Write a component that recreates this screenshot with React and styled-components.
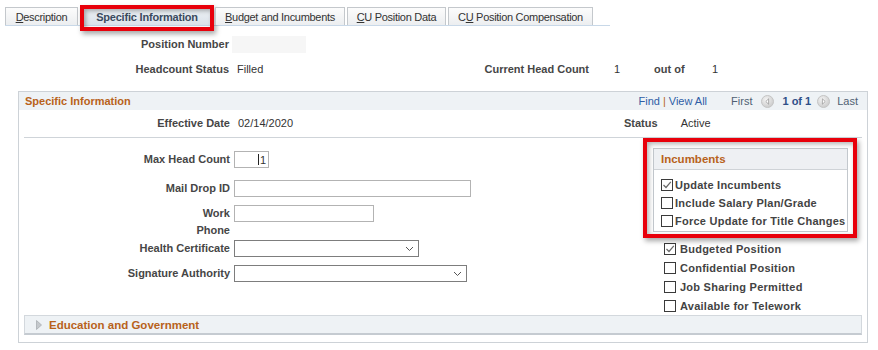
import React from "react";
import styled, { createGlobalStyle, css } from "styled-components";

const GlobalStyle = createGlobalStyle`
  html, body { margin: 0; padding: 0; background: #fff; }
  body {
    font-family: "Liberation Sans", Arial, sans-serif;
    font-size: 11px;
    color: #333;
  }
  * { box-sizing: border-box; }
`;

const ORANGE = "#b8621b";
const LABEL = "#464646";

const Page = styled.div`
  width: 878px;
  height: 350px;
  overflow: hidden;
  padding-top: 7px;
`;

/* ---------- Tabs ---------- */
const TabStrip = styled.div`
  display: flex;
  align-items: flex-end;
  margin-left: 5px;
  width: 605px;
  height: 19px;
  border-bottom: 1px solid #c8d8e8;
`;

const Tab = styled.div`
  position: relative;
  flex: none;
  width: ${(p) => p.$w}px;
  height: 18px;
  margin-right: ${(p) => p.$gap || 0}px;
  display: flex;
  align-items: center;
  justify-content: center;
  border: 1px solid #c4c8cc;
  border-bottom: none;
  background: linear-gradient(#fcfcfc, #eceef0);
  font-size: 11px;
  letter-spacing: -0.3px;
  color: #333;
  white-space: nowrap;
  ${(p) =>
    p.$active &&
    css`
      background: linear-gradient(#edf1f5, #dbe2ea);
      border-color: #a9bdd3;
      font-weight: bold;
      color: #3b4a5e;
      letter-spacing: -0.2px;
      &::after {
        content: "";
        position: absolute;
        left: -3px;
        top: -3px;
        right: -3px;
        bottom: -6px;
        border: 4px solid #e8000b;
        box-shadow: 2px 3px 5px rgba(0, 0, 0, 0.35),
          inset 2px 2px 4px rgba(0, 0, 0, 0.3);
        pointer-events: none;
      }
    `}
`;

/* ---------- Top info ---------- */
const InfoBlock = styled.div`
  margin-top: 10px;
  display: flex;
  flex-direction: column;
  gap: 8px;
`;

const InfoRow = styled.div`
  display: flex;
  align-items: center;
  height: 17px;
`;

const Label = styled.div`
  flex: none;
  width: ${(p) => (p.$w ? `${p.$w}px` : "auto")};
  text-align: right;
  font-weight: bold;
  color: ${LABEL};
  line-height: 17px;
  white-space: nowrap;
`;

const Value = styled.div`
  flex: none;
  width: ${(p) => (p.$w ? `${p.$w}px` : "auto")};
  padding-left: ${(p) => p.$pl || 0}px;
  color: #333;
  line-height: 17px;
  white-space: nowrap;
`;

const ReadBox = styled.div`
  margin-left: 3px;
  width: 74px;
  height: 17px;
  background: #f6f6f6;
`;

/* ---------- Section ---------- */
const Section = styled.section`
  margin: 13px 0 0 18px;
  width: 850px;
  border: 1px solid #cdd2d7;
  padding-bottom: 7px;
`;

const SectionHeader = styled.div`
  height: 18px;
  background: #eef2f5;
  display: flex;
  align-items: center;
  justify-content: space-between;
  padding: 0 9px 0 6px;
`;

const SectionTitle = styled.div`
  font-weight: bold;
  color: ${ORANGE};
  font-size: ${(p) => p.$size || 11}px;
`;

const Nav = styled.div`
  display: flex;
  align-items: center;
  white-space: nowrap;
`;

const NavLink = styled.span`
  color: #2f5ea6;
`;

const NavSep = styled.span`
  color: ${ORANGE};
  margin: 0 3px;
`;

const NavText = styled.span`
  color: #4f5f73;
  margin-left: ${(p) => p.$ml || 0}px;
  font-weight: ${(p) => (p.$bold ? "bold" : "normal")};
  ${(p) => p.$bold && css`color: #2e4f88;`}
`;

const PagerBtn = styled.span`
  display: inline-flex;
  width: 13px;
  height: 13px;
  margin: 0 ${(p) => p.$mr}px 0 ${(p) => p.$ml}px;
`;

const EffRow = styled.div`
  margin: 0 5px;
  height: 28px;
  display: flex;
  align-items: center;
  border-bottom: 1px solid #cfd4d9;
`;

const Body = styled.div`
  display: flex;
  align-items: flex-start;
`;

const FormCol = styled.div`
  padding-top: 13px;
  display: flex;
  flex-direction: column;
`;

const FieldRow = styled.div`
  display: flex;
  align-items: flex-start;
  gap: 4px;
  margin-top: ${(p) => p.$mt || 0}px;
`;

const TextBox = styled.div`
  width: ${(p) => p.$w}px;
  height: 17px;
  border: 1px solid #b3b3b3;
  background: #fff;
  display: flex;
  align-items: center;
  justify-content: flex-end;
  padding-right: 2px;
  color: #333;
`;

const Caret = styled.span`
  display: inline-block;
  width: 1px;
  height: 11px;
  background: #222;
  margin-right: 1px;
`;

const SelectBox = styled.div`
  width: ${(p) => p.$w}px;
  height: 17px;
  border: 1px solid #7d7d7d;
  background: #fff;
  display: flex;
  align-items: center;
  justify-content: flex-end;
  padding-right: 4px;
`;

const SideCol = styled.div`
  margin-left: auto;
  margin-right: 19px;
  width: 195px;
  display: flex;
  flex-direction: column;
`;

const GroupBox = styled.div`
  position: relative;
  margin-top: 10px;
  border: 1px solid #c3c8cd;
  background: #fff;
  &::after {
    content: "";
    position: absolute;
    left: -11px;
    top: -11px;
    right: -10px;
    bottom: -7px;
    border: 4px solid #e8000b;
    box-shadow: 2px 3px 5px rgba(0, 0, 0, 0.35),
      inset 2px 2px 5px rgba(0, 0, 0, 0.3);
    pointer-events: none;
  }
`;

const GroupHeader = styled.div`
  height: 21px;
  background: #eef0f3;
  border-bottom: 1px solid #cfd3d7;
  display: flex;
  align-items: center;
  padding-left: 7px;
`;

const GroupBody = styled.div`
  padding: 6px 0 1px 7px;
`;

const CheckList = styled.div`
  margin-top: 7px;
  padding-left: 11px;
`;

const CheckRow = styled.div`
  display: flex;
  align-items: center;
  height: ${(p) => p.$h}px;
  gap: ${(p) => p.$gap}px;
`;

const Box = styled.span`
  flex: none;
  width: 12px;
  height: 12px;
  border: 1px solid #3a3a3a;
  background: #fff;
  display: inline-flex;
`;

const CheckLabel = styled.span`
  font-weight: bold;
  color: #434343;
  letter-spacing: 0.25px;
  white-space: nowrap;
`;

const EduBar = styled.div`
  margin: 0 5px;
  height: 20px;
  background: #eef2f5;
  border: 1px solid #d3d8dd;
  border-bottom: 2px solid #c5cbd1;
  display: flex;
  align-items: center;
  gap: 7px;
  padding-left: 11px;
`;

/* ---------- Small drawings ---------- */
const Chevron = () => (
  <svg width="9" height="6" viewBox="0 0 9 6">
    <path d="M1 1 L4.5 4.5 L8 1" fill="none" stroke="#555" strokeWidth="1" />
  </svg>
);

const Pager = ({ dir, id }) => (
  <svg width="13" height="13" viewBox="0 0 13 13">
    <defs>
      <radialGradient id={id} cx="40%" cy="35%" r="70%">
        <stop offset="0%" stopColor="#f4f4f4" />
        <stop offset="100%" stopColor="#c9c9c9" />
      </radialGradient>
    </defs>
    <circle cx="6.5" cy="6.5" r="6" fill={`url(#${id})`} stroke="#c4c4c4" />
    {dir === "left" ? (
      <path d="M7.6 3.8 L4.8 6.5 L7.6 9.2 Z" fill="#fff" stroke="#8f8f8f" strokeWidth="0.7" />
    ) : (
      <path d="M5.4 3.8 L8.2 6.5 L5.4 9.2 Z" fill="#fff" stroke="#8f8f8f" strokeWidth="0.7" />
    )}
  </svg>
);

const Check = ({ checked }) => (
  <Box>
    {checked && (
      <svg width="10" height="10" viewBox="0 0 10 10">
        <path d="M1.5 5 L4 7.5 L8.8 1.8" fill="none" stroke="#6a6a6a" strokeWidth="1.2" />
      </svg>
    )}
  </Box>
);

const Triangle = () => (
  <svg width="6" height="10" viewBox="0 0 6 10">
    <path d="M0.5 0.5 L5.5 5 L0.5 9.5 Z" fill="#c4c8cc" stroke="#a9aeb3" strokeWidth="0.8" />
  </svg>
);

export default function App() {
  return (
    <Page>
      <GlobalStyle />
      <TabStrip>
        <Tab $w={73} $gap={4}>
          <span><u>D</u>escription</span>
        </Tab>
        <Tab $w={130} $gap={3} $active>
          Specific Information
        </Tab>
        <Tab $w={130} $gap={2}>
          <span><u>B</u>udget and Incumbents</span>
        </Tab>
        <Tab $w={99} $gap={2}>
          <span><u>C</u>U Position Data</span>
        </Tab>
        <Tab $w={145}>
          <span>C<u>U</u> Position Compensation</span>
        </Tab>
      </TabStrip>

      <InfoBlock>
        <InfoRow>
          <Label $w={229}>Position Number</Label>
          <ReadBox />
        </InfoRow>
        <InfoRow>
          <Label $w={229}>Headcount Status</Label>
          <Value $w={251} $pl={8}>Filled</Value>
          <Label $w={109}>Current Head Count</Label>
          <Value $w={65} $pl={25}>1</Value>
          <Label $w={58} style={{ textAlign: "left" }}>out of</Label>
          <Value>1</Value>
        </InfoRow>
      </InfoBlock>

      <Section>
        <SectionHeader>
          <SectionTitle>Specific Information</SectionTitle>
          <Nav>
            <NavLink>Find</NavLink>
            <NavSep>|</NavSep>
            <NavLink>View All</NavLink>
            <NavText $ml={24}>First</NavText>
            <PagerBtn $ml={9} $mr={8}>
              <Pager dir="left" id="pgl" />
            </PagerBtn>
            <NavText $bold>1 of 1</NavText>
            <PagerBtn $ml={6} $mr={7}>
              <Pager dir="right" id="pgr" />
            </PagerBtn>
            <NavText>Last</NavText>
          </Nav>
        </SectionHeader>

        <EffRow>
          <Label $w={206}>Effective Date</Label>
          <Value $w={394} $pl={8}>02/14/2020</Value>
          <Label>Status</Label>
          <Value $pl={23}>Active</Value>
        </EffRow>

        <Body>
          <FormCol>
            <FieldRow>
              <Label $w={211}>Max Head Count</Label>
              <TextBox $w={35}>
                <Caret />1
              </TextBox>
            </FieldRow>
            <FieldRow $mt={12}>
              <Label $w={211}>Mail Drop ID</Label>
              <TextBox $w={237} />
            </FieldRow>
            <FieldRow $mt={8}>
              <Label $w={211}>
                Work
                <br />
                Phone
              </Label>
              <TextBox $w={140} />
            </FieldRow>
            <FieldRow $mt={1}>
              <Label $w={211}>Health Certificate</Label>
              <SelectBox $w={185}>
                <Chevron />
              </SelectBox>
            </FieldRow>
            <FieldRow $mt={8}>
              <Label $w={211}>Signature Authority</Label>
              <SelectBox $w={233}>
                <Chevron />
              </SelectBox>
            </FieldRow>
          </FormCol>

          <SideCol>
            <GroupBox>
              <GroupHeader>
                <SectionTitle $size={11.5}>Incumbents</SectionTitle>
              </GroupHeader>
              <GroupBody>
                <CheckRow $h={18} $gap={2}>
                  <Check checked />
                  <CheckLabel>Update Incumbents</CheckLabel>
                </CheckRow>
                <CheckRow $h={18} $gap={2}>
                  <Check />
                  <CheckLabel>Include Salary Plan/Grade</CheckLabel>
                </CheckRow>
                <CheckRow $h={18} $gap={2}>
                  <Check />
                  <CheckLabel>Force Update for Title Changes</CheckLabel>
                </CheckRow>
              </GroupBody>
            </GroupBox>
            <CheckList>
              <CheckRow $h={19} $gap={4}>
                <Check checked />
                <CheckLabel>Budgeted Position</CheckLabel>
              </CheckRow>
              <CheckRow $h={19} $gap={4}>
                <Check />
                <CheckLabel>Confidential Position</CheckLabel>
              </CheckRow>
              <CheckRow $h={19} $gap={4}>
                <Check />
                <CheckLabel>Job Sharing Permitted</CheckLabel>
              </CheckRow>
              <CheckRow $h={19} $gap={4}>
                <Check />
                <CheckLabel>Available for Telework</CheckLabel>
              </CheckRow>
            </CheckList>
          </SideCol>
        </Body>

        <EduBar>
          <Triangle />
          <SectionTitle $size={11.5}>Education and Government</SectionTitle>
        </EduBar>
      </Section>
    </Page>
  );
}
